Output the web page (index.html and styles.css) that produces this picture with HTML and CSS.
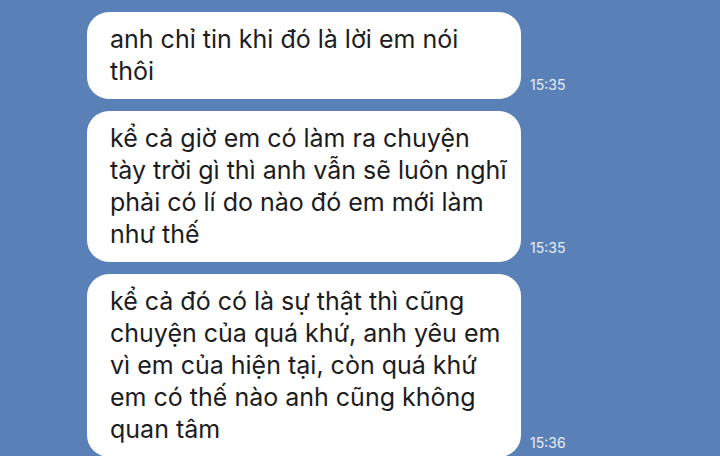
FILE: index.html
```html
<!DOCTYPE html>
<html lang="vi">
<head>
    <meta charset="UTF-8">
    <meta name="viewport" content="width=device-width, initial-scale=1.0">
    <title>Tin nhắn</title>
    <link rel="stylesheet" href="styles.css">
</head>
<body>
    <div class="chat">
        <div class="row">
            <div class="bubble">anh chỉ tin khi đó là lời em nói<br>thôi</div>
            <span class="time">15:35</span>
        </div>
        <div class="row">
            <div class="bubble">kể cả giờ em có làm ra chuyện<br>tày trời gì thì anh vẫn sẽ luôn nghĩ<br>phải có lí do nào đó em mới làm<br>như thế</div>
            <span class="time">15:35</span>
        </div>
        <div class="row">
            <div class="bubble">kể cả đó có là sự thật thì cũng<br>chuyện của quá khứ, anh yêu em<br>vì em của hiện tại, còn quá khứ<br>em có thế nào anh cũng không<br>quan tâm</div>
            <span class="time">15:36</span>
        </div>
    </div>
</body>
</html>
```

FILE: styles.css
```css
html, body {
    margin: 0;
    height: 100%;
}
body {
    background-color: #5a81b7;
    font-family: Inter, "Noto Sans", sans-serif;
    overflow: hidden;
}
.chat {
    display: flex;
    flex-direction: column;
    gap: 12px;
    padding: 12px 0 0 87px;
}
.row {
    display: flex;
    align-items: flex-end;
}
.bubble {
    width: 434px;
    box-sizing: border-box;
    padding: 11px 16px 12px 23px;
    background-color: #fff;
    border-radius: 22px;
    color: #1c1c1e;
    font-size: 25px;
    line-height: 32px;
    white-space: nowrap;
}
.time {
    margin: 0 0 6px 9px;
    color: #e8eef7;
    font-size: 14px;
}
```
